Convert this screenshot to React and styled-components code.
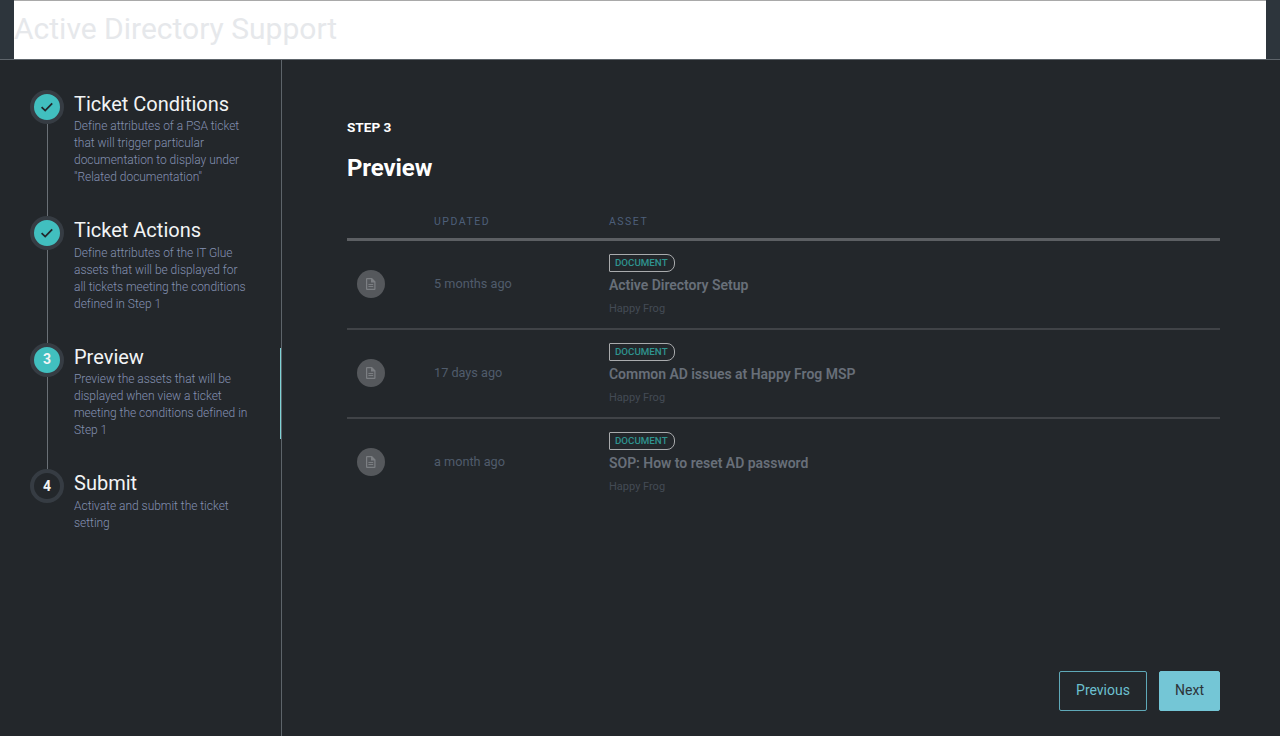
import React from "react";
import styled, { createGlobalStyle } from "styled-components";

const Global = createGlobalStyle`
  html, body { margin: 0; padding: 0; height: 100%; background: #23272b; }
  body { font-family: Roboto, "Liberation Sans", sans-serif; overflow: hidden; }
  * { box-sizing: border-box; }
`;

const Page = styled.div`
  width: 1280px;
  height: 736px;
  display: flex;
  flex-direction: column;
  background: #23272b;
`;

const Header = styled.header`
  height: 60px;
  padding: 0 14px;
  background: #2d353c;
  border-bottom: 1px solid #5e656b;
`;

const TitleBar = styled.div`
  height: 59px;
  background: #fff;
  border-top: 1px solid #a9a9a9;
`;

const Title = styled.h1`
  margin: 0;
  font-size: 30px;
  font-weight: 400;
  line-height: 55px;
  color: #e6e8eb;
`;

const Body = styled.div`
  flex: 1;
  display: flex;
  min-height: 0;
`;

const Sidebar = styled.aside`
  width: 282px;
  padding-top: 30px;
  border-right: 1px solid #5d646a;
`;

const Step = styled.div`
  display: flex;
  height: ${(p) => p.$h}px;
  padding-left: 30px;
  gap: 10px;
  position: relative;
`;

const Marker = styled.div`
  width: 34px;
  display: flex;
  flex-direction: column;
  align-items: center;
  flex: none;
`;

const Circle = styled.div`
  width: 34px;
  height: 34px;
  flex: none;
  border-radius: 50%;
  border: 4px solid #363c43;
  background: ${(p) => (p.$done ? "#41bfbf" : "#23272b")};
  color: ${(p) => (p.$dark ? "#23272b" : "#f2f4f5")};
  display: flex;
  align-items: center;
  justify-content: center;
  font-size: 14px;
  font-weight: 700;
  padding-bottom: 1px;
`;

const Line = styled.div`
  flex: 1;
  width: 1px;
  background: #6a7076;
`;

const StepText = styled.div`
  padding-top: 1px;
  width: 176px;
`;

const StepTitle = styled.div`
  font-size: 20px;
  line-height: 26.4px;
  color: #f2f4f5;
`;

const StepDesc = styled.div`
  margin-top: 1px;
  font-size: 12px;
  font-weight: 300;
  line-height: 17px;
  letter-spacing: -0.03px;
  color: #8491b2;
  white-space: nowrap;
`;

const ActiveBar = styled.div`
  position: absolute;
  right: 0;
  top: 5px;
  width: 1px;
  height: 91px;
  background: #7fd3d6;
`;

const Main = styled.main`
  flex: 1;
  padding: 59px 60px 25px 65px;
  display: flex;
  flex-direction: column;
`;

const Eyebrow = styled.div`
  font-size: 13.6px;
  font-weight: 700;
  line-height: 16px;
  height: 16px;
  color: #fff;
`;

const Heading = styled.h2`
  margin: 18px 0 0;
  font-size: 24px;
  line-height: 30px;
  font-weight: 700;
  letter-spacing: -0.1px;
  color: #fff;
`;

const TableHead = styled.div`
  margin-top: 26px;
  height: 32px;
  display: grid;
  grid-template-columns: 87px 175px 1fr;
  align-items: start;
  border-bottom: 3px solid #5c5f63;
  padding-top: 6px;
`;

const HeadCell = styled.div`
  font-size: 10.5px;
  line-height: 14px;
  letter-spacing: 1.5px;
  color: #4d5f7a;
  grid-column: ${(p) => p.$col};
`;

const Row = styled.div`
  height: 89px;
  display: grid;
  grid-template-columns: 87px 175px 1fr;
  border-bottom: 2px solid ${(p) => (p.$last ? "transparent" : "#404347")};
`;

const IconCell = styled.div`
  display: flex;
  align-items: center;
  padding-left: 10px;
  padding-bottom: 1px;
`;

const DocIcon = styled.div`
  width: 28px;
  height: 28px;
  border-radius: 50%;
  background: #55585c;
  color: #7c7f83;
  display: flex;
  align-items: center;
  justify-content: center;
`;

const Updated = styled.div`
  display: flex;
  align-items: center;
  padding-bottom: 3px;
  font-size: 12.7px;
  color: #505c6c;
`;

const Asset = styled.div`
  padding-top: 13px;
  display: flex;
  flex-direction: column;
  align-items: flex-start;
`;

const Badge = styled.span`
  height: 18px;
  width: 66px;
  border: 1px solid #a9abad;
  border-radius: 1px 8px 8px 1px;
  color: #2f9490;
  font-size: 9.75px;
  font-weight: 500;
  line-height: 16px;
  padding-left: 5px;
`;

const AssetName = styled.div`
  margin-top: 3px;
  font-size: 14px;
  font-weight: 600;
  line-height: 20px;
  letter-spacing: -0.03px;
  color: #686f79;
`;

const AssetOrg = styled.div`
  margin-top: 7px;
  font-size: 11px;
  line-height: 14px;
  color: #444b55;
`;

const Footer = styled.div`
  margin-top: auto;
  display: flex;
  justify-content: flex-end;
  gap: 12px;
`;

const Button = styled.button`
  height: 40px;
  padding: 0 0 2px;
  width: ${(p) => p.$w}px;
  font-family: inherit;
  font-size: 14px;
  border-radius: 2px;
  border: 1px solid ${(p) => (p.$primary ? "#74c6d6" : "#5fa9b8")};
  background: ${(p) => (p.$primary ? "#74c6d6" : "transparent")};
  color: ${(p) => (p.$primary ? "#2d3338" : "#6cc0d0")};
`;

const Check = () => (
  <svg width="14" height="14" viewBox="0 0 14 14" fill="none" stroke="currentColor" strokeWidth="1.8">
    <path d="M1.6 7.2 5.2 10.6 12.2 3.4" />
  </svg>
);

const FileIcon = () => (
  <svg width="10" height="12" viewBox="0 0 10 12" fill="currentColor">
    <path d="M1 0h5l3.5 3.5V11a1 1 0 0 1-1 1H1a1 1 0 0 1-1-1V1a1 1 0 0 1 1-1zm.2 1.2v9.6h7.1V4.6H5V1.2zM2.4 6h4.8v1H2.4zm0 2h4.8v1H2.4z" fillRule="evenodd" />
  </svg>
);

const steps = [
  { h: 126.4, title: "Ticket Conditions", done: true, dark: true, icon: <Check />, lines: ["Define attributes of a PSA ticket", "that will trigger particular", "documentation to display under", '"Related documentation"'] },
  { h: 126.4, title: "Ticket Actions", done: true, dark: true, icon: <Check />, lines: ["Define attributes of the IT Glue", "assets that will be displayed for", "all tickets meeting the conditions", "defined in Step 1"] },
  { h: 126.4, title: "Preview", done: true, icon: "3", active: true, lines: ["Preview the assets that will be", "displayed when view a ticket", "meeting the conditions defined in", "Step 1"] },
  { h: 100, title: "Submit", icon: "4", last: true, lines: ["Activate and submit the ticket", "setting"] },
];

const rows = [
  { when: "5 months ago", name: "Active Directory Setup" },
  { when: "17 days ago", name: "Common AD issues at Happy Frog MSP" },
  { when: "a month ago", name: "SOP: How to reset AD password", last: true },
];

export default function App() {
  return (
    <Page>
      <Global />
      <Header>
        <TitleBar>
          <Title>Active Directory Support</Title>
        </TitleBar>
      </Header>
      <Body>
        <Sidebar>
          {steps.map((s) => (
            <Step key={s.title} $h={s.h}>
              <Marker>
                <Circle $done={s.done} $dark={s.dark}>{s.icon}</Circle>
                {!s.last && <Line />}
              </Marker>
              <StepText>
                <StepTitle>{s.title}</StepTitle>
                <StepDesc>
                  {s.lines.map((l) => (
                    <div key={l}>{l}</div>
                  ))}
                </StepDesc>
              </StepText>
              {s.active && <ActiveBar />}
            </Step>
          ))}
        </Sidebar>
        <Main>
          <Eyebrow>STEP 3</Eyebrow>
          <Heading>Preview</Heading>
          <TableHead>
            <HeadCell $col={2}>UPDATED</HeadCell>
            <HeadCell $col={3}>ASSET</HeadCell>
          </TableHead>
          {rows.map((r) => (
            <Row key={r.name} $last={r.last}>
              <IconCell>
                <DocIcon><FileIcon /></DocIcon>
              </IconCell>
              <Updated>{r.when}</Updated>
              <Asset>
                <Badge>DOCUMENT</Badge>
                <AssetName>{r.name}</AssetName>
                <AssetOrg>Happy Frog</AssetOrg>
              </Asset>
            </Row>
          ))}
          <Footer>
            <Button $w={88}>Previous</Button>
            <Button $w={61} $primary>Next</Button>
          </Footer>
        </Main>
      </Body>
    </Page>
  );
}
